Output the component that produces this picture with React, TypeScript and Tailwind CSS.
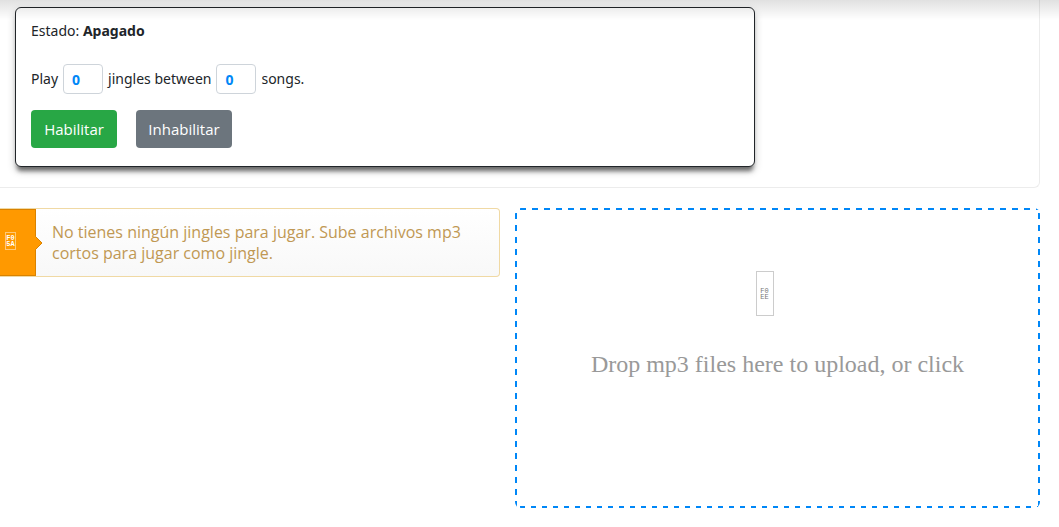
import { useState } from "react";

function CountInput({ label }: { label: string }) {
  const [value, setValue] = useState("0");
  return (
    <input
      type="text"
      inputMode="numeric"
      aria-label={label}
      value={value}
      onChange={(e) => setValue(e.target.value)}
      className="h-[30px] w-10 rounded border border-[#ced4da] bg-white px-2 text-sm font-bold text-[#0087f7]"
    />
  );
}

function StatusCard() {
  return (
    <section className="rounded-br-md border-r border-b border-[#ececec] pt-[7px] pr-5 pb-5 pl-[15px]">
      <div className="w-full max-w-[740px] rounded-md border border-[#212529] bg-white px-[15px] pt-3 pb-[18px] text-[#212529] shadow-[0_4px_8px_rgba(0,0,0,0.2),0_6px_4px_-2px_rgba(0,0,0,0.5)]">
        <p className="font-['Noto_Sans',sans-serif] text-sm leading-[22px]">
          Estado: <strong className="font-bold">Apagado</strong>
        </p>
        <div className="mt-[22px] flex items-center gap-[5px] font-['Noto_Sans',sans-serif] text-sm">
          <span>Play</span>
          <CountInput label="Jingles" />
          <span>jingles between</span>
          <CountInput label="Songs" />
          <span>songs.</span>
        </div>
        <div className="mt-4 flex gap-[19px] text-[15px] text-white">
          <button type="button" className="h-[38px] w-[86px] rounded bg-[#28a745]">
            Habilitar
          </button>
          <button type="button" className="h-[38px] w-24 rounded bg-[#6c757d]">
            Inhabilitar
          </button>
        </div>
      </div>
    </section>
  );
}

function CodeBox({ rows, className }: { rows: [string, string]; className: string }) {
  return (
    <span
      aria-hidden="true"
      className={`flex flex-col items-center justify-center border font-['Liberation_Mono',monospace] text-[7px] leading-[6px] ${className}`}
    >
      <span>{rows[0]}</span>
      <span>{rows[1]}</span>
    </span>
  );
}

function EmptyNotice() {
  return (
    <div
      role="alert"
      className="flex items-stretch self-start rounded-r border border-l-0 border-[#f0d9a4] bg-linear-to-b from-white to-[#f8f8f8]"
    >
      <div className="relative flex w-9 shrink-0 items-center border-y border-r border-[#d98200] bg-[#ff9900] pb-[3px] pl-[5px]">
        <CodeBox rows={["F0", "5A"]} className="h-[18px] w-[11px] border-[#ffc877] font-bold text-white" />
        <svg
          aria-hidden="true"
          viewBox="0 0 8 14"
          className="absolute top-1/2 -right-2 h-3.5 w-2 -translate-y-1/2"
        >
          <path d="M0 0 7 7 0 14Z" fill="#ff9900" />
          <path d="M.5 .5 7 7 .5 13.5" fill="none" stroke="#d98200" />
        </svg>
      </div>
      <p className="pt-[13px] pr-4 pb-3 pl-4 text-base leading-[21px] font-medium text-[#c09853]">
        No tienes ningún jingles para jugar. Sube archivos mp3 cortos para jugar como jingle.
      </p>
    </div>
  );
}

function DropZone() {
  return (
    <button
      type="button"
      className="flex min-h-[300px] flex-col items-center rounded-md bg-white bg-[image:linear-gradient(90deg,#0087f7_50%,transparent_50%),linear-gradient(90deg,#0087f7_50%,transparent_50%),linear-gradient(#0087f7_50%,transparent_50%),linear-gradient(#0087f7_50%,transparent_50%)] bg-[length:12px_2px,11px_2px,2px_12px,2px_12px] bg-[position:5px_0,5px_100%,0_5px,100%_5px] [background-repeat:repeat-x,repeat-x,repeat-y,repeat-y] pt-[63px] font-['Liberation_Serif',serif] text-2xl text-[#999999]"
    >
      <span className="pr-[26px]">
        <CodeBox rows={["F0", "EE"]} className="h-[45px] w-[18px] border-[#cccccc] text-[#777777]" />
      </span>
      <span className="mt-8">Drop mp3 files here to upload, or click</span>
    </button>
  );
}

export default function App() {
  return (
    <div className="relative min-h-screen bg-white font-['Open_Sans',sans-serif]">
      <main className="pr-[19px]">
        <StatusCard />
        <div className="mt-5 grid grid-cols-[500fr_525fr] gap-[15px]">
          <EmptyNotice />
          <DropZone />
        </div>
      </main>
      <div className="pointer-events-none absolute inset-x-0 top-0 h-5 bg-linear-to-b from-black/12 to-transparent" />
    </div>
  );
}
